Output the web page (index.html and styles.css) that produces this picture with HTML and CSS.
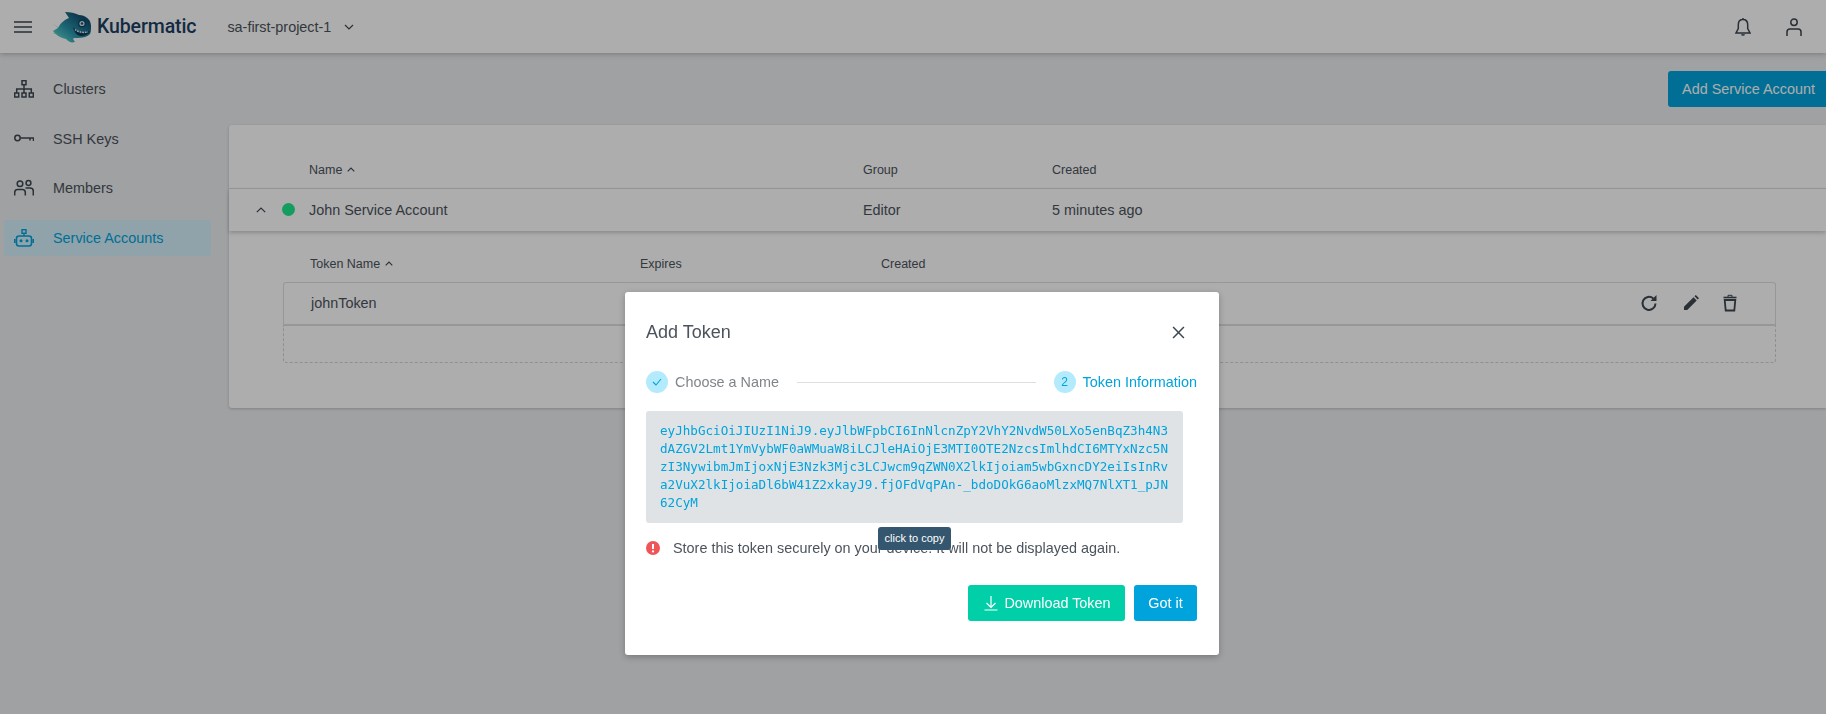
FILE: index.html
```html
<!DOCTYPE html>
<html lang="en">
<head>
<meta charset="utf-8">
<title>Service Accounts</title>
<link rel="stylesheet" href="styles.css">
</head>
<body>
<header class="topbar">
  <svg class="icon menu-icon" viewBox="0 0 18 12"><path d="M0 1h18M0 6h18M0 11h18" fill="none" stroke="#3d4750" stroke-width="1.5"/></svg>
  <div class="logo">
    <svg class="fish" viewBox="0 0 40 32">
      <defs>
        <linearGradient id="fishg" x1="0.1" y1="0.9" x2="0.8" y2="0.2">
          <stop offset="0" stop-color="#5fd6c8"/>
          <stop offset="0.45" stop-color="#2a95ad"/>
          <stop offset="1" stop-color="#12506f"/>
        </linearGradient>
      </defs>
      <path d="M0 12l6 5-5 6 10-3z" fill="#8fe0d2"/>
      <path d="M6 17C9 11 14 8 17 7L13 1c5 0 10 1 14 3 6 0 12 4 12 11 0 3 0 6-1 8-3 3-8 4-13 4l-3 0-1 1 2 3c-4 1-6 0-9-3-5-1-9-3-13-8z" fill="url(#fishg)"/>
      <circle cx="30" cy="12.5" r="4" fill="#0e4766"/>
      <circle cx="30" cy="12.5" r="2.6" fill="#cfe2e8"/>
      <circle cx="30" cy="12.5" r="1.2" fill="#12506f"/>
      <path d="M21 16c3 4 9 6 17 4-2 4-6 5-9 5-4 0-7-4-8-9z" fill="#0c3b58"/>
      <path d="M23 18.500c3 2.500 8 3.500 13 2.500" fill="none" stroke="#e8f3f5" stroke-width="1.500" stroke-dasharray="1.800 .8"/>
    </svg>
    <span class="logo-text">Kubermatic</span>
  </div>
  <div class="project">
    <span>sa-first-project-1</span>
    <svg class="icon chevron-down" viewBox="0 0 10 6"><path d="M1 1l4 4 4-4" fill="none" stroke="#3d4750" stroke-width="1.200"/></svg>
  </div>
  <div class="top-actions">
    <svg class="icon bell" viewBox="0 0 16 18"><path d="M8 1.500c-3 0-4.700 2.300-4.700 5.200v3.900L1 15h14l-2.300-4.400V6.700c0-2.900-1.700-5.200-4.700-5.200zM8 0v1.500M6.500 16.300c.5 1 2.500 1 3 0" fill="none" stroke="#3d4750" stroke-width="1.500"/></svg>
    <svg class="icon user" viewBox="0 0 16 18"><circle cx="8" cy="4.200" r="3.200" fill="none" stroke="#3d4750" stroke-width="1.500"/><path d="M1 18v-4c0-2 1.300-3 3-3h8c1.700 0 3 1 3 3v4" fill="none" stroke="#3d4750" stroke-width="1.500"/></svg>
  </div>
</header>

<div class="layout">
  <nav class="sidebar">
    <a class="nav-item">
      <svg class="icon nav-icon" viewBox="0 0 20 18"><g fill="none" stroke="#3d4750" stroke-width="1.500"><rect x="8" y=".7" width="4" height="4"/><rect x=".7" y="13" width="4" height="4"/><rect x="8" y="13" width="4" height="4"/><rect x="15.300" y="13" width="4" height="4"/><path d="M10 4.700V13M2.700 13V9h14.600v4"/></g></svg>
      <span>Clusters</span>
    </a>
    <a class="nav-item">
      <svg class="icon nav-icon" viewBox="0 0 20 10"><g fill="none" stroke="#3d4750" stroke-width="1.500"><circle cx="3.500" cy="4" r="2.700"/><path d="M6.200 4h13.300v3M16 4v2.500"/></g></svg>
      <span>SSH Keys</span>
    </a>
    <a class="nav-item">
      <svg class="icon nav-icon" viewBox="0 0 20 16"><g fill="none" stroke="#3d4750" stroke-width="1.500"><circle cx="6" cy="3.700" r="2.800"/><circle cx="14.500" cy="3" r="2.400"/><path d="M.7 15.500v-3c0-2 1.300-3 3-3h4.600c1.700 0 3 1 3 3v3M11.500 8h4.500c2 0 3.300 1.200 3.300 3v4.500"/></g></svg>
      <span>Members</span>
    </a>
    <a class="nav-item nav-item-active">
      <svg class="icon nav-icon" viewBox="0 0 20 18"><rect x="2.500" y="7" width="15" height="10" rx="2.500" fill="none" stroke="#00a3dc" stroke-width="1.600"/><path d="M.8 10v4M19.200 10v4" stroke="#00a3dc" stroke-width="1.600"/><circle cx="7" cy="11.800" r="1.500" fill="#00a3dc"/><circle cx="13" cy="11.800" r="1.500" fill="#00a3dc"/><rect x="8" y=".7" width="4" height="3.600" fill="none" stroke="#00a3dc" stroke-width="1.400"/><path d="M10 4.300v2.700" stroke="#00a3dc" stroke-width="1.400"/></svg>
      <span>Service Accounts</span>
    </a>
  </nav>

  <main class="content">
    <div class="toolbar"><button class="primary-btn">Add Service Account</button></div>
    <section class="panel">
      <div class="table-head row-grid">
        <span></span>
        <span class="sort">Name <svg class="icon sort-icon" viewBox="0 0 8 5"><path d="M.7 4.300L4 1l3.300 3.300" fill="none" stroke="#3d4750" stroke-width="1.100"/></svg></span>
        <span>Group</span>
        <span>Created</span>
      </div>
      <div class="account-row row-grid">
        <span class="lead">
          <svg class="icon row-chevron" viewBox="0 0 10 6"><path d="M.8 5.200L5 1l4.200 4.200" fill="none" stroke="#3d4750" stroke-width="1.200"/></svg>
          <i class="status-dot"></i>
        </span>
        <span>John Service Account</span>
        <span>Editor</span>
        <span>5 minutes ago</span>
      </div>
      <div class="details">
        <div class="token-head token-grid">
          <span class="sort">Token Name <svg class="icon sort-icon" viewBox="0 0 8 5"><path d="M.7 4.300L4 1l3.300 3.300" fill="none" stroke="#3d4750" stroke-width="1.100"/></svg></span>
          <span>Expires</span>
          <span>Created</span>
        </div>
        <div class="token-box">
          <div class="token-row">
            <span>johnToken</span>
            <div class="row-actions">
              <svg class="icon act act-refresh" viewBox="0 0 18 18"><path d="M15.500 9.500A6.500 6.500 0 1 1 13.300 4.500" fill="none" stroke="#3d4750" stroke-width="2"/><path d="M10.500 7H16.500V1z" fill="#3d4750"/></svg>
              <svg class="icon act act-pencil" viewBox="0 0 18 18"><path d="M2 16v-3.200L11.500 3.300l3.200 3.200L5.200 16zM12.500 2.300l1.300-1.300 3.200 3.200-1.300 1.300z" fill="#3d4750"/></svg>
              <svg class="icon act act-trash" viewBox="0 0 18 18"><path d="M3.700 6l1 10.500h8.600l1-10.500z" fill="none" stroke="#3d4750" stroke-width="1.800"/><path d="M2.500 3.500h13" stroke="#3d4750" stroke-width="1.600"/><path d="M7 3V1.300h4V3" fill="none" stroke="#3d4750" stroke-width="1"/></svg>
            </div>
          </div>
          <div class="token-empty"></div>
        </div>
      </div>
    </section>
  </main>
</div>

<div class="backdrop"></div>

<div class="dialog">
  <div class="dialog-head">
    <h2>Add Token</h2>
    <svg class="icon close" viewBox="0 0 12 12"><path d="M1 1l10 10M11 1L1 11" fill="none" stroke="#3d4750" stroke-width="1.400"/></svg>
  </div>
  <div class="stepper">
    <span class="step-circle"><svg class="icon step-check" viewBox="0 0 10 8"><path d="M1 4l3 3 5-6" fill="none" stroke="#00a3dc" stroke-width="1.100"/></svg></span>
    <span class="step-label">Choose a Name</span>
    <span class="step-line"></span>
    <span class="step-circle">2</span>
    <span class="step-label step-label-active">Token Information</span>
  </div>
  <div class="token-value">eyJhbGciOiJIUzI1NiJ9.eyJlbWFpbCI6InNlcnZpY2VhY2NvdW50LXo5enBqZ3h4N3dAZGV2Lmt1YmVybWF0aWMuaW8iLCJleHAiOjE3MTI0OTE2NzcsImlhdCI6MTYxNzc5NzI3NywibmJmIjoxNjE3Nzk3Mjc3LCJwcm9qZWN0X2lkIjoiam5wbGxncDY2eiIsInRva2VuX2lkIjoiaDl6bW41Z2xkayJ9.fjOFdVqPAn-_bdoDOkG6aoMlzxMQ7NlXT1_pJN62CyM</div>
  <div class="warning">
    <svg class="icon warn-icon" viewBox="0 0 14 14"><circle cx="7" cy="7" r="7" fill="#ef5558"/><path d="M7 3v5" stroke="#fff" stroke-width="2"/><circle cx="7" cy="10.400" r="1.100" fill="#fff"/></svg>
    <span>Store this token securely on your device. It will not be displayed again.</span>
    <span class="tooltip">click to copy</span>
  </div>
  <div class="dialog-actions">
    <button class="btn btn-green">
      <svg class="icon dl" viewBox="0 0 14 16"><path d="M7 1v11M2.500 8L7 12.500 11.500 8M0.500 15h13" fill="none" stroke="#fff" stroke-width="1.200"/></svg>
      Download Token
    </button>
    <button class="btn btn-blue">Got it</button>
  </div>
</div>
</body>
</html>
```

FILE: styles.css
```css
* { box-sizing: border-box; }
html, body { margin: 0; height: 714px; overflow: hidden; }
body {
  background: #ebedef;
  color: #4b535c;
  font-family: "Liberation Sans", Arial, sans-serif;
  font-size: 14.400px;
}
.icon { display: block; flex: none; }

/* Top bar */
.topbar {
  display: flex;
  align-items: center;
  height: 53px;
  padding: 0 24px 0 14px;
  background: #fff;
  box-shadow: 0 1px 5px rgba(0, 0, 0, .25);
  position: relative;
}
.menu-icon { width: 18px; height: 12px; }
.logo { display: flex; align-items: center; margin-left: 20px; }
.fish { width: 40px; height: 32px; margin-right: 5px; }
.logo-text { font-family: Roboto, sans-serif; font-size: 19.500px; font-weight: 500; color: #1c3f63; letter-spacing: -.1px; }
.project { display: flex; align-items: center; margin-left: 31px; }
.chevron-down { width: 10px; height: 6px; margin-left: 13px; }
.top-actions { display: flex; align-items: center; gap: 35px; margin-left: auto; }
.bell, .user { width: 16px; height: 18px; }

/* Layout */
.layout { display: flex; height: 661px; }
.sidebar {
  width: 229px;
  flex: none;
  display: flex;
  flex-direction: column;
  gap: 13.500px;
  padding: 18px 18px 0 4px;
}
.nav-item {
  display: flex;
  align-items: center;
  height: 36px;
  padding-left: 10px;
  border-radius: 3px;
  color: #4b535c;
}
.nav-item-active { background: #d4f1fb; color: #00a3dc; }
.nav-icon { width: 20px; height: 18px; margin-right: 19px; }

.content { flex: 1; min-width: 0; }
.toolbar { display: flex; justify-content: flex-end; padding-top: 18px; height: 72px; }
.primary-btn {
  height: 36px;
  width: 158px;
  padding: 0 0 0 3px;
  border: 0;
  border-radius: 3px 0 0 3px;
  background: #00a3dc;
  color: #fff;
  font: inherit;
}

/* Panel */
.panel {
  height: 283px;
  background: #fff;
  border-radius: 3px 0 0 3px;
  box-shadow: 0 1px 3px rgba(0, 0, 0, .2);
}
.row-grid { display: grid; grid-template-columns: 80px 554px 189px 1fr; align-items: center; }
.table-head {
  height: 64px;
  padding-top: 26px;
  border-bottom: 1px solid #dcdfe2;
  font-size: 12.500px;
}
.sort { display: inline-flex; align-items: center; gap: 5px; }
.sort-icon { width: 8px; height: 5px; }
.account-row {
  height: 42px;
  position: relative;
  box-shadow: 0 2px 4px rgba(0, 0, 0, .2);
}
.lead { display: flex; align-items: center; padding-left: 27px; }
.row-chevron { width: 10px; height: 6px; }
.status-dot {
  width: 13px;
  height: 13px;
  margin-left: 16px;
  margin-bottom: 2px;
  border-radius: 50%;
  background: #20e88d;
}
.details { padding: 0 50px 0 54px; }
.token-grid { display: grid; grid-template-columns: 330px 241px 1fr; align-items: center; }
.token-head { height: 51px; padding: 14px 0 0 27px; font-size: 12.500px; }
.token-box { display: flex; flex-direction: column; }
.token-row {
  display: flex;
  align-items: center;
  justify-content: space-between;
  height: 44px;
  padding: 0 36px 2px 27px;
  border: 1px solid #dcdfe2;
  border-bottom-width: 2px;
  border-radius: 3px 3px 0 0;
}
.token-empty {
  height: 37px;
  border: 1px dashed #d0d3d6;
  border-top: 0;
  border-radius: 0 0 3px 3px;
}
.row-actions { display: flex; align-items: center; gap: 21px; }
.act { width: 18px; height: 18px; }
.act-refresh { margin-right: 3px; }

/* Dialog */
.backdrop { position: fixed; inset: 0; background: rgba(0, 0, 0, .32); }
.dialog {
  position: absolute;
  left: 625px;
  top: 292px;
  width: 594px;
  height: 363px;
  padding: 0 22px 0 21px;
  background: #fff;
  border-radius: 3px;
  box-shadow: 0 2px 6px rgba(0, 0, 0, .25);
}
.dialog-head {
  display: flex;
  align-items: center;
  justify-content: space-between;
  height: 79px;
  padding-top: 1px;
  padding-right: 12px;
}
.dialog-head h2 { margin: 0; font-size: 18px; font-weight: 400; }
.close { width: 13px; height: 13px; }
.stepper { display: flex; align-items: center; height: 22px; }
.step-circle {
  display: flex;
  align-items: center;
  justify-content: center;
  width: 22px;
  height: 22px;
  border-radius: 50%;
  background: #b3ebfc;
  color: #00a3dc;
  font-size: 12px;
}
.step-check { width: 10px; height: 8px; }
.step-label { margin-left: 7px; color: #80858b; }
.step-label-active { color: #00a3dc; }
.step-line { flex: 1; height: 1px; margin: 0 18px; background: #dcdfe2; }
.token-value {
  width: 537px;
  height: 112px;
  margin-top: 18px;
  padding: 11px 14px;
  background: #dfe3e6;
  border-radius: 3px;
  color: #00a3dc;
  font-family: "DejaVu Sans Mono", monospace;
  font-size: 12.600px;
  line-height: 18px;
  word-break: break-all;
}
.warning {
  position: relative;
  display: flex;
  align-items: center;
  gap: 13px;
  height: 20px;
  margin-top: 15px;
}
.warn-icon { width: 14px; height: 14px; }
.tooltip {
  position: absolute;
  left: 232px;
  top: -11px;
  width: 73px;
  height: 23px;
  border-radius: 3px;
  background: #34566f;
  color: #fff;
  font-size: 11px;
  line-height: 22px;
  text-align: center;
}
.dialog-actions { display: flex; justify-content: flex-end; gap: 9px; margin-top: 27px; }
.btn {
  display: flex;
  align-items: center;
  justify-content: center;
  height: 36px;
  padding: 0;
  border: 0;
  border-radius: 3px;
  color: #fff;
  font: inherit;
}
.btn-green { width: 157px; padding-left: 2px; background: #00cfa8; }
.btn-blue { width: 63px; background: #00a3dc; }
.dl { width: 14px; height: 16px; margin-right: 6px; }
```
